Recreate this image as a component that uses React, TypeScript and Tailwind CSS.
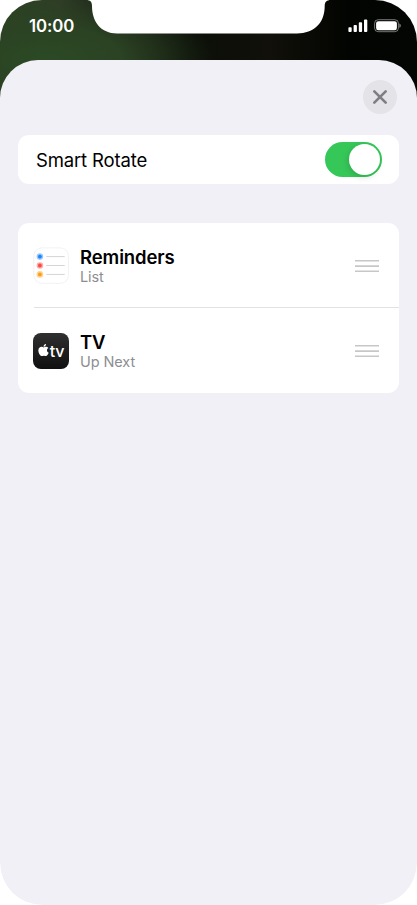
import React, { useState } from 'react';
import { FaApple } from 'react-icons/fa';

interface WidgetItem {
    id: string;
    name: string;
    detail: string;
    icon: React.ReactNode;
}

const SignalIcon: React.FC = () => (
    <svg width="20" height="14" viewBox="0 0 20 14" fill="#fff">
        <rect x="0.4" y="8.2" width="3.3" height="4.7" rx="0.9" />
        <rect x="5.6" y="6" width="3.3" height="6.9" rx="0.9" />
        <rect x="10.8" y="3.2" width="3.3" height="9.7" rx="0.9" />
        <rect x="16" y="0.5" width="3.3" height="12.4" rx="0.9" />
    </svg>
);

const BatteryIcon: React.FC = () => (
    <svg width="28" height="14" viewBox="0 0 28 14">
        <rect x="0.6" y="0.7" width="23.8" height="12" rx="3.6" fill="none" stroke="#fff" strokeOpacity="0.45" strokeWidth="1" />
        <rect x="2.1" y="2.2" width="20.8" height="9" rx="2.2" fill="#fff" />
        <path d="M25.300 4.600c1 .4 1.500 1.200 1.500 2.100s-.5 1.700-1.500 2.100z" fill="#fff" fillOpacity="0.5" />
    </svg>
);

const RemindersIcon: React.FC = () => (
    <svg width="36" height="37" viewBox="0 0 36 37">
        <rect x="0.8" y="0.9" width="34.6" height="35.4" rx="8" fill="#fff" stroke="#f2f2f4" />
        {[
            { y: 9.6, color: '#1a84fc' },
            { y: 18.5, color: '#fb4a43' },
            { y: 27.4, color: '#fc9d14' },
        ].map(dot => (
            <g key={dot.y}>
                <circle cx="6.9" cy={dot.y} r="3.3" fill={dot.color} fillOpacity="0.45" />
                <circle cx="6.9" cy={dot.y} r="1.9" fill={dot.color} />
                <path d={`M13.300 ${dot.y}H31.700`} stroke="#d4d4d6" strokeWidth="1" />
            </g>
        ))}
    </svg>
);

const TvIcon: React.FC = () => (
    <div className="flex h-9 w-9 items-center justify-center rounded-[8px] bg-linear-to-b from-[#303030] to-[#101010] text-white">
        <FaApple className="-mt-0.5 h-[14px] w-[11px]" />
        <span className="ml-px text-[16px] leading-none font-medium tracking-[-0.3px]">tv</span>
    </div>
);

const DragHandle: React.FC = () => (
    <svg width="24" height="14" viewBox="0 0 24 14" stroke="#c7c7c9" strokeWidth="1.6">
        <path d="M0 1.700h24M0 7.100h24M0 12.300h24" />
    </svg>
);

const widgets: WidgetItem[] = [
    { id: 'reminders', name: 'Reminders', detail: 'List', icon: <RemindersIcon /> },
    { id: 'tv', name: 'TV', detail: 'Up Next', icon: <TvIcon /> },
];

const StatusBar: React.FC = () => (
    <div className="relative flex h-[51px] items-center justify-between pr-[15px] pl-[29px]">
        {/* Notch */}
        <svg className="absolute top-0 left-[86px]" width="245" height="34" viewBox="0 0 245 34">
            <path d="M0 0C4.500 0 6 2 6 6C6 22 15 33.400 31 33.400H211C228 33.400 238.700 23 238.700 6C238.700 2 240.500 0 245 0Z" fill="#fff" />
        </svg>
        <span className="text-[16.800px] leading-5 font-semibold tracking-[-0.1px] text-white">10:00</span>
        <div className="flex items-center gap-1.5">
            <SignalIcon />
            <BatteryIcon />
        </div>
    </div>
);

const App: React.FC = () => {
    const [smartRotate, setSmartRotate] = useState(true);

    return (
        <div className="h-[905px] w-[417px] overflow-hidden bg-white font-[Inter,sans-serif]">
            <div className="h-full overflow-hidden rounded-[42px] bg-[radial-gradient(ellipse_170px_75px_at_45px_60px,#2b4a24_0%,#2b4223_45%,transparent_100%),linear-gradient(90deg,#2c4420_0px,#303b28_60px,#1a1f15_100px,#0b0e08_190px,#11100a_270px,#020401_350px,#030602_417px)] bg-[length:100%_104px] bg-no-repeat">
                <StatusBar />

                <div className="mt-[9px] h-[845px] rounded-t-[38px] rounded-b-[42px] bg-[#f1f0f6] px-[18px] pt-5">
                    <div className="flex justify-end pr-0.5">
                        <button aria-label="Close" className="flex h-[34px] w-[34px] items-center justify-center rounded-full bg-[#e4e3e8]">
                            <svg width="16" height="16" viewBox="0 0 16 16" stroke="#7f7f83" strokeWidth="2.600" strokeLinecap="round">
                                <path d="M2.300 2.300L13.700 13.700M13.700 2.300L2.300 13.700" />
                            </svg>
                        </button>
                    </div>

                    <div className="mt-[21px] flex h-[49px] items-center justify-between rounded-[11px] bg-white pr-[17.500px] pl-[18px]">
                        <span className="text-[18.500px] leading-6 tracking-[-0.15px] text-black">Smart Rotate</span>
                        <button
                            role="switch"
                            aria-checked={smartRotate}
                            aria-label="Smart Rotate"
                            onClick={() => setSmartRotate(!smartRotate)}
                            className={`flex h-[35px] w-[57px] items-center rounded-full px-0.5 ${smartRotate ? 'justify-end bg-[#36c759]' : 'justify-start bg-[#e9e9eb]'}`}
                        >
                            <span className="h-[31px] w-[31px] rounded-full bg-white shadow-[-1px_2px_6px_rgba(0,0,0,0.15)]" />
                        </button>
                    </div>

                    <div className="mt-[39px] overflow-hidden rounded-[11px] bg-white">
                        {widgets.map((w, i) => (
                            <div key={w.id} className="pl-4">
                                {i > 0 && <div className="h-px bg-[#e2e2e4]" />}
                                <div className={`-ml-px flex items-center pr-5 ${i > 0 ? 'h-[85px]' : 'h-[84px] pt-px'}`}>
                                    {w.icon}
                                    <div className={`ml-[11px] flex-1 ${i > 0 ? 'pt-px' : 'pt-0.5'}`}>
                                        <p className="text-[18.500px] leading-[21px] font-semibold tracking-[-0.1px] text-black">{w.name}</p>
                                        <p className="text-[14.500px] leading-[18px] tracking-[-0.1px] text-[#8e8e92]">{w.detail}</p>
                                    </div>
                                    <DragHandle />
                                </div>
                            </div>
                        ))}
                    </div>
                </div>
            </div>
        </div>
    );
};

export default App;
